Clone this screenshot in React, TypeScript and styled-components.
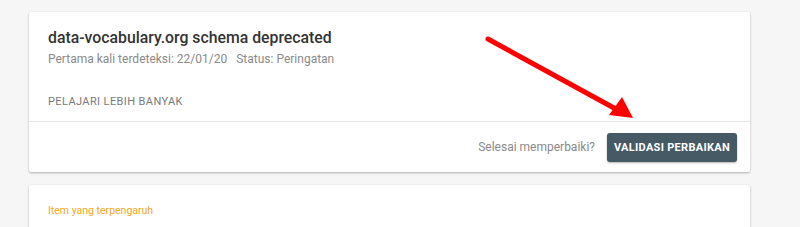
import React from 'react';
import styled, { createGlobalStyle } from 'styled-components';

const GlobalStyle = createGlobalStyle`
  * {
    margin: 0;
    padding: 0;
    box-sizing: border-box;
  }

  body {
    font-family: Roboto, 'Liberation Sans', sans-serif;
    background: #f6f6f6;
    overflow: hidden;
  }
`;

const Page = styled.div`
  width: 800px;
  height: 227px;
  padding: 12px 50px 0 29px;
  display: flex;
  flex-direction: column;
  gap: 13px;
  position: relative;
`;

const Card = styled.div`
  background: #ffffff;
  border-radius: 2px;
  box-shadow: 0 1px 2px rgba(0, 0, 0, 0.18), 0 1px 3px rgba(0, 0, 0, 0.12);
`;

const Body = styled.div`
  padding: 16px 19px 0 19px;
  height: 110px;
  border-bottom: 1px solid #e6e6e6;
`;

const Title = styled.h2`
  font-size: 15.8px;
  font-weight: 500;
  color: #333333;
  line-height: 20px;
`;

const Meta = styled.div`
  display: flex;
  gap: 9px;
  margin-top: 3px;
  font-size: 12px;
  color: #8a8a8a;
  line-height: 16px;
`;

const LearnMore = styled.a`
  display: block;
  margin-top: 28px;
  font-size: 11px;
  letter-spacing: 0.4px;
  color: #7a7a7a;
  line-height: 14px;
  text-transform: uppercase;
`;

const Footer = styled.div`
  height: 50px;
  display: flex;
  align-items: center;
  justify-content: flex-end;
  gap: 12px;
  padding-right: 13px;
`;

const Question = styled.span`
  font-size: 12px;
  color: #8a8a8a;
`;

const Button = styled.button`
  height: 29px;
  padding: 0 7px;
  border: none;
  border-radius: 3px;
  background: #455a64;
  color: #ffffff;
  font-family: Roboto, 'Liberation Sans', sans-serif;
  font-size: 11px;
  font-weight: 700;
  letter-spacing: 0.3px;
  box-shadow: 0 1px 2px rgba(0, 0, 0, 0.3);
`;

const SecondCard = styled(Card)`
  flex: 1;
  padding: 20px 19px;
`;

const Affected = styled.div`
  font-size: 10.5px;
  color: #f5a623;
  line-height: 12px;
`;

const Arrow = styled.svg`
  position: absolute;
  left: 0;
  top: 0;
  pointer-events: none;
`;

export default function App() {
  return (
    <>
      <GlobalStyle />
      <Page>
        <Card>
          <Body>
            <Title>data-vocabulary.org schema deprecated</Title>
            <Meta>
              <span>Pertama kali terdeteksi: 22/01/20</span>
              <span>Status: Peringatan</span>
            </Meta>
            <LearnMore>Pelajari lebih banyak</LearnMore>
          </Body>
          <Footer>
            <Question>Selesai memperbaiki?</Question>
            <Button>VALIDASI PERBAIKAN</Button>
          </Footer>
        </Card>
        <SecondCard>
          <Affected>Item yang terpengaruh</Affected>
        </SecondCard>
        <Arrow width="800" height="227" viewBox="0 0 800 227">
          <line x1="488" y1="39" x2="614" y2="108" stroke="#ff0000" strokeWidth="5" strokeLinecap="round" />
          <polygon points="633,118 609,115 622,97" fill="#ff0000" />
        </Arrow>
      </Page>
    </>
  );
}
